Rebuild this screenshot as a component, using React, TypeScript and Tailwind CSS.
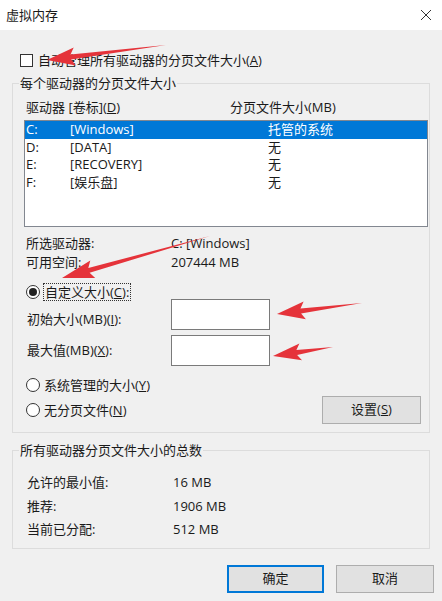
import React from 'react';

const FONT = { fontFamily: '"Open Sans", "Noto Sans CJK SC", sans-serif' };

const DRIVES = [
  { letter: 'C:', label: '[Windows]', size: '托管的系统', selected: true },
  { letter: 'D:', label: '[DATA]', size: '无', selected: false },
  { letter: 'E:', label: '[RECOVERY]', size: '无', selected: false },
  { letter: 'F:', label: '[娱乐盘]', size: '无', selected: false },
];

// tapered red annotation arrow, tail -> tip
function arrowPoints(tx: number, ty: number, hx: number, hy: number, headLen: number, headW: number, shaftW: number) {
  const dx = hx - tx;
  const dy = hy - ty;
  const len = Math.hypot(dx, dy);
  const ux = dx / len;
  const uy = dy / len;
  const px = -uy;
  const py = ux;
  const bx = hx - ux * headLen;
  const by = hy - uy * headLen;
  const wx = bx - ux * 4;
  const wy = by - uy * 4;
  const pts = [
    [tx, ty],
    [bx + (px * shaftW) / 2, by + (py * shaftW) / 2],
    [wx + (px * headW) / 2, wy + (py * headW) / 2],
    [hx, hy],
    [wx - (px * headW) / 2, wy - (py * headW) / 2],
    [bx - (px * shaftW) / 2, by - (py * shaftW) / 2],
  ];
  return pts.map((p) => `${p[0].toFixed(1)},${p[1].toFixed(1)}`).join(' ');
}

function Radio({ checked }: { checked?: boolean }) {
  return (
    <span className="w-[14px] h-[14px] rounded-full border border-[#333] bg-white flex items-center justify-center shrink-0">
      {checked && <span className="w-[8px] h-[8px] rounded-full bg-[#222]" />}
    </span>
  );
}

function Btn({ children, primary, className = '' }: { children: React.ReactNode; primary?: boolean; className?: string }) {
  return (
    <div
      className={`h-[28px] flex items-center justify-center bg-[#e1e1e1] text-[13px] text-[#1a1a1a] ${
        primary ? 'border-2 border-[#0078d7]' : 'border border-[#adadad]'
      } ${className}`}
    >
      {children}
    </div>
  );
}

export default function App() {
  return (
    <div className="relative w-[442px] h-[601px] bg-[#f0f0f0] overflow-hidden text-[13px] text-[#1a1a1a]" style={FONT}>
      {/* Title bar */}
      <div className="h-[30px] bg-white flex items-center justify-between pl-[6px] pr-[10px]">
        <span className="leading-[18px]">虚拟内存</span>
        <svg width="12" height="12" viewBox="0 0 12 12" className="text-[#333]">
          <path d="M1 1 L11 11 M11 1 L1 11" stroke="currentColor" strokeWidth="1" fill="none" />
        </svg>
      </div>

      <div className="px-[12px]">
        {/* Auto manage checkbox */}
        <div className="mt-[21px] h-[18px] pl-[8px] flex items-center gap-[5px]">
          <span className="w-[13px] h-[13px] border border-[#333] bg-white shrink-0" />
          <span className="leading-[18px]">
            自动管理所有驱动器的分页文件大小(<u>A</u>)
          </span>
        </div>

        {/* Per drive group */}
        <div className="mt-[14px] border border-[#dcdcdc] h-[350px] flex flex-col">
          <div className="-mt-[10px] ml-[6px] w-fit px-[1px] h-[18px] leading-[18px] bg-[#f0f0f0]">
            每个驱动器的分页文件大小
          </div>

          <div className="mt-[6px] h-[18px] pl-[13px] flex items-center leading-[18px]">
            <span className="w-[204px]">
              驱动器 [卷标](<u>D</u>)
            </span>
            <span>分页文件大小(MB)</span>
          </div>

          {/* Drive list */}
          <div className="mt-[4px] ml-[11px] mr-[1px] h-[107px] border border-[#828790] bg-white">
            {DRIVES.map((d) => (
              <div
                key={d.letter}
                className={`h-[17.5px] flex items-center pl-[1px] leading-[17px] ${
                  d.selected ? 'bg-[#0078d7] text-white' : ''
                }`}
              >
                <span className="w-[44px]">{d.letter}</span>
                <span className="w-[198px]">{d.label}</span>
                <span>{d.size}</span>
              </div>
            ))}
          </div>

          <div className="mt-[7px] h-[18px] pl-[13px] flex items-center leading-[18px]">
            <span className="w-[145px]">所选驱动器:</span>
            <span>C: [Windows]</span>
          </div>
          <div className="mt-[1px] h-[18px] pl-[13px] flex items-center leading-[18px]">
            <span className="w-[145px]">可用空间:</span>
            <span>207444 MB</span>
          </div>

          {/* Custom size */}
          <div className="mt-[11px] h-[20px] pl-[13px] flex items-center">
            <Radio checked />
            <span className="ml-[3px] px-[1px] border border-dotted border-[#333] leading-[16px]">
              自定义大小(<u>C</u>):
            </span>
          </div>
          <div className="-mt-[3px] h-[31px] pl-[14px] flex items-start">
            <span className="w-[144px] mt-[11px] leading-[18px]">
              初始大小(MB)(<u>I</u>):
            </span>
            <div className="w-[99px] h-[31px] border border-[#7a7a7a] bg-white" />
          </div>
          <div className="mt-[5px] h-[31px] pl-[14px] flex items-start">
            <span className="w-[144px] mt-[6px] leading-[18px]">
              最大值(MB)(<u>X</u>):
            </span>
            <div className="w-[99px] h-[31px] border border-[#7a7a7a] bg-white" />
          </div>

          <div className="mt-[10px] h-[18px] pl-[13px] flex items-center gap-[4px]">
            <Radio />
            <span className="leading-[18px]">
              系统管理的大小(<u>Y</u>)
            </span>
          </div>
          <div className="mt-[2px] h-[28px] pl-[13px] pr-[8px] flex items-center gap-[4px]">
            <Radio />
            <span className="leading-[18px]">
              无分页文件(<u>N</u>)
            </span>
            <Btn className="ml-auto w-[99px]">
              设置(<u>S</u>)
            </Btn>
          </div>
        </div>

        {/* Totals group */}
        <div className="mt-[17px] border border-[#dcdcdc] h-[99px] flex flex-col">
          <div className="-mt-[10px] ml-[6px] w-fit px-[1px] h-[18px] leading-[18px] bg-[#f0f0f0]">
            所有驱动器分页文件大小的总数
          </div>
          {[
            ['允许的最小值:', '16 MB', 'mt-[14px]'],
            ['推荐:', '1906 MB', 'mt-[6px]'],
            ['当前已分配:', '512 MB', 'mt-[5px]'],
          ].map(([k, v, m]) => (
            <div key={k} className={`${m} h-[18px] pl-[14px] flex items-center leading-[18px]`}>
              <span className="w-[146px]">{k}</span>
              <span>{v}</span>
            </div>
          ))}
        </div>

        {/* Dialog buttons */}
        <div className="mt-[16px] -mr-[4px] flex justify-end gap-[12px]">
          <Btn primary className="w-[97px]">
            确定
          </Btn>
          <Btn className="w-[98px]">取消</Btn>
        </div>
      </div>

      {/* red annotation arrows over the dialog */}
      <svg className="absolute inset-0 pointer-events-none" width="442" height="601" viewBox="0 0 442 601">
        <g fill="#e5333a">
          <polygon points={arrowPoints(166, 45, 47, 60, 24, 18, 5)} />
          <polygon points={arrowPoints(210, 236, 62, 278, 28, 18, 5)} />
          <polygon points={arrowPoints(362, 303, 277, 314, 24, 18, 5)} />
          <polygon points={arrowPoints(333, 347, 273, 356, 24, 17, 5)} />
        </g>
      </svg>
    </div>
  );
}
